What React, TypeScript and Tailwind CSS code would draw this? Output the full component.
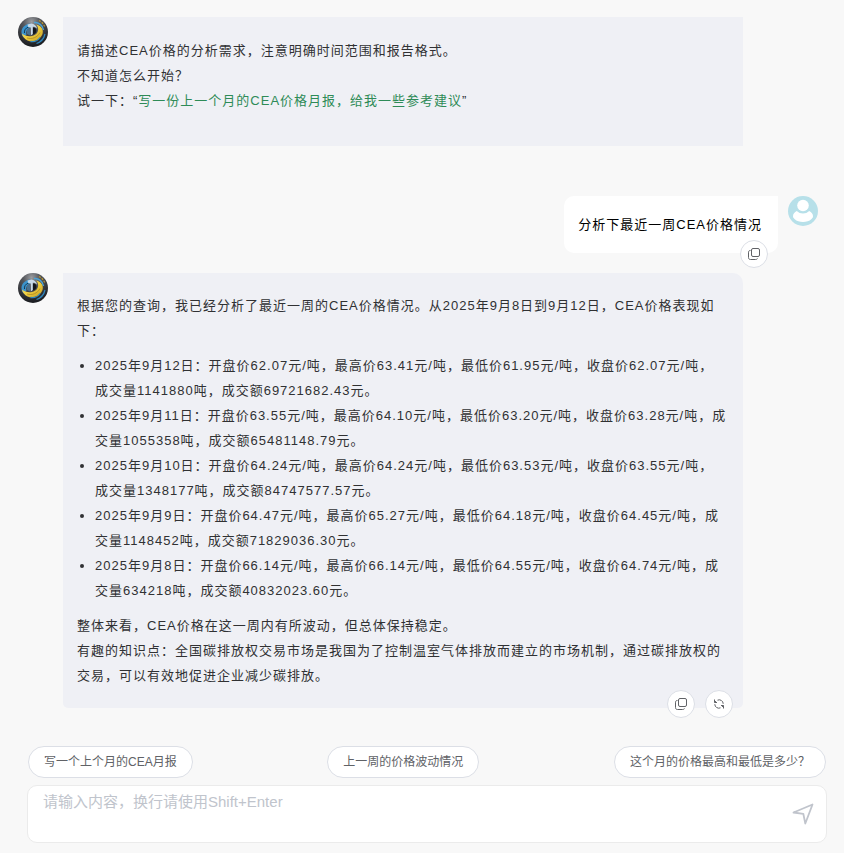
import { useState } from 'react';

const days = [
  '2025年9月12日：开盘价62.07元/吨，最高价63.41元/吨，最低价61.95元/吨，收盘价62.07元/吨，成交量1141880吨，成交额69721682.43元。',
  '2025年9月11日：开盘价63.55元/吨，最高价64.10元/吨，最低价63.20元/吨，收盘价63.28元/吨，成交量1055358吨，成交额65481148.79元。',
  '2025年9月10日：开盘价64.24元/吨，最高价64.24元/吨，最低价63.53元/吨，收盘价63.55元/吨，成交量1348177吨，成交额84747577.57元。',
  '2025年9月9日：开盘价64.47元/吨，最高价65.27元/吨，最低价64.18元/吨，收盘价64.45元/吨，成交量1148452吨，成交额71829036.30元。',
  '2025年9月8日：开盘价66.14元/吨，最高价66.14元/吨，最低价64.55元/吨，收盘价64.74元/吨，成交量634218吨，成交额40832023.60元。',
];

const prompts = ['写一个上个月的CEA月报', '上一周的价格波动情况', '这个月的价格最高和最低是多少？'];

const roundButton =
  'flex h-7 w-7 items-center justify-center rounded-full border border-[#dcdfe6] bg-white text-[#606266] hover:text-[#409eff]';

function BotAvatar() {
  return (
    <svg viewBox="0 0 30 30" className="h-[30px] w-[30px] shrink-0" aria-hidden="true">
      <defs>
        <radialGradient id="ball" cx="0.45" cy="0.15" r="0.8">
          <stop offset="0" stopColor="#9a9ca0" />
          <stop offset="0.35" stopColor="#55575c" />
          <stop offset="1" stopColor="#1d1f23" />
        </radialGradient>
        <linearGradient id="gold" x1="0" y1="0" x2="1" y2="1">
          <stop offset="0" stopColor="#f3dd70" />
          <stop offset="0.5" stopColor="#f0cf3f" />
          <stop offset="1" stopColor="#c39a22" />
        </linearGradient>
      </defs>
      <circle cx="15" cy="15" r="15" fill="url(#ball)" />
      {/* outer flecks */}
      <path d="M21 3.500C24 5 26 7.500 27 10.500" fill="none" stroke="#b9982f" strokeWidth="1.300" strokeDasharray="2 1.200" />
      <path d="M27 17C26 21.500 23 25 18.500 26.500" fill="none" stroke="#2f86bd" strokeWidth="1.200" />
      {/* blue wave */}
      <path d="M12.500 6.500C7 7 3.200 11 3.500 15.500C3.700 18 4.500 19.500 6 20.500L8.500 17.500C7.500 14.500 9 11.500 12.500 10.500Z" fill="#3b93cc" />
      <path d="M10.500 10C7.500 11 6 13.500 6.500 16" fill="none" stroke="#163a55" strokeWidth="1" />
      <path d="M16 5.500C20.500 5 25 8.500 25.500 13" fill="none" stroke="#4ba3d6" strokeWidth="1.400" />
      {/* gold crescent */}
      <path d="M18 7.500C23 8.500 26 12.500 24.500 17C22.500 23 15.500 26 9.500 23.500C6.500 22 4.500 19.500 4 16.500C7 19 10.500 19.800 14 19C18.500 18 20.800 14.500 20 11C19.700 9.500 19 8.500 18 7.500Z" fill="url(#gold)" />
      <path d="M9 21C14 22.500 19.500 20.500 22 15.500" fill="none" stroke="#a98320" strokeWidth="0.700" />
      <path d="M12.500 24.500C16 25 20 23.500 22 20.500" fill="none" stroke="#2f86bd" strokeWidth="1.300" />
      {/* centre */}
      <path d="M14.500 10.500C17.500 10 19 12 18.300 14.500C17.800 16.200 16.500 17.300 14.500 17.500Z" fill="#12161c" />
      <path d="M9.500 7.500L13.500 6.500C17 7.500 18.500 9 19 11.500C17.500 10 16.500 9.700 14.800 9.700V17L12.800 18.500V10.500L10 9.800Z" fill="#c8d9e8" />
      <path d="M9 12V17L12 18.500V12Z" fill="#49708f" />
    </svg>
  );
}

function UserAvatar() {
  return (
    <svg viewBox="0 0 30 30" className="h-[30px] w-[30px] shrink-0" aria-hidden="true">
      <circle cx="15" cy="15" r="15" fill="#b7e0e9" />
      <circle cx="15" cy="9.500" r="5.800" fill="#fff" />
      <path d="M8.800 15C10.500 16.700 12.600 17.500 15 17.500S19.500 16.700 21.200 15C23.500 16 25 18 25 20.200C25 21.300 24.500 22 23.500 23C21.200 25.200 18.300 26 15 26S8.800 25.200 6.500 23C5.500 22 5 21.300 5 20.200C5 18 6.500 16 8.800 15Z" fill="#fff" />
    </svg>
  );
}

function CopyIcon() {
  return (
    <svg viewBox="0 0 12 12" className="h-3 w-3" fill="none" stroke="currentColor" aria-hidden="true">
      <rect x="3.500" y="0.500" width="8" height="8" rx="1.500" />
      <path d="M2.500 2.500C1.200 2.500.5 3 .5 4.200V9.500C.5 10.800 1.200 11.500 2.500 11.500H7.500C8.800 11.500 9.500 10.800 9.500 10.500" />
    </svg>
  );
}

function RefreshIcon() {
  return (
    <svg viewBox="0 0 10 10" className="h-[10px] w-[10px]" fill="none" stroke="currentColor" aria-hidden="true">
      <path d="M.5.500V3.500H3M9.500 9.500V6.500H7" />
      <path d="M3.500 1.200A4 4 0 0 1 9.200 4.800M.8 3.300L2 2M6.500 8.800A4 4 0 0 1 .8 5.200M9.200 6.700L8 8" />
    </svg>
  );
}

export default function App() {
  const [message, setMessage] = useState('');

  return (
    <div className="min-h-screen bg-[#f8f8f8] pt-[17px] pb-[10px] font-['Liberation_Sans','Noto_Sans_CJK_SC',sans-serif] text-[13px] leading-[25px] text-[#303133]">
      <main className="px-[18px] tracking-[1px]">
        {/* Greeting */}
        <div className="flex items-start gap-[15px] pr-[83px]">
          <BotAvatar />
          <div className="min-w-0 flex-1 bg-[#eff0f5] pt-[21px] pr-4 pb-[33px] pl-[14px]">
            <p>请描述CEA价格的分析需求，注意明确时间范围和报告格式。</p>
            <p>不知道怎么开始？</p>
            <p>
              试一下：“
              <a href="#try" className="text-[#2e8b57]">写一份上一个月的CEA价格月报，给我一些参考建议</a>”
            </p>
          </div>
        </div>

        {/* Question */}
        <div className="mt-[50px] flex items-start justify-end gap-[10px] pr-2">
          <div className="relative rounded-[10px] rounded-tr-none bg-white py-4 pr-4 pl-[14px] text-black">
            <p>分析下最近一周CEA价格情况</p>
            <button type="button" aria-label="复制" className={`absolute right-[10px] -bottom-[15px] ${roundButton}`}>
              <CopyIcon />
            </button>
          </div>
          <UserAvatar />
        </div>

        {/* Answer */}
        <div className="mt-5 flex items-start gap-[15px] pr-[83px]">
          <BotAvatar />
          <div className="relative min-w-0 flex-1 rounded-[5px] rounded-tl-none rounded-tr-[10px] bg-[#eff0f5] py-5 pr-4 pl-[14px]">
            <p>根据您的查询，我已经分析了最近一周的CEA价格情况。从2025年9月8日到9月12日，CEA价格表现如下：</p>
            <ul className="my-[10px] list-disc pl-[18px]">
              {days.map((day) => (
                <li key={day}>{day}</li>
              ))}
            </ul>
            <p>整体来看，CEA价格在这一周内有所波动，但总体保持稳定。</p>
            <p>有趣的知识点：全国碳排放权交易市场是我国为了控制温室气体排放而建立的市场机制，通过碳排放权的交易，可以有效地促进企业减少碳排放。</p>
            <div className="absolute right-[10px] -bottom-[10px] flex gap-[10px]">
              <button type="button" aria-label="复制" className={roundButton}>
                <CopyIcon />
              </button>
              <button type="button" aria-label="重新生成" className={roundButton}>
                <RefreshIcon />
              </button>
            </div>
          </div>
        </div>
      </main>

      <footer className="mt-[38px] pr-[17px] pl-[27px]">
        <div className="flex justify-between px-px">
          {prompts.map((prompt) => (
            <button
              key={prompt}
              type="button"
              onClick={() => setMessage(prompt)}
              className="h-8 rounded-full border border-[#dcdfe6] bg-white px-[15px] text-xs text-[#606266]"
            >
              {prompt}
            </button>
          ))}
        </div>
        <div className="mt-[7px] flex h-[58px] items-center rounded-[10px] border border-[#ebebeb] bg-white pr-3 pl-[15px]">
          <textarea
            aria-label="输入内容"
            value={message}
            onChange={(e) => setMessage(e.target.value)}
            placeholder="请输入内容，换行请使用Shift+Enter"
            className="h-full min-w-0 flex-1 resize-none pt-1 text-[15px] leading-6 outline-none placeholder:text-[#c0c4cc]"
          />
          <button type="button" aria-label="发送" className="text-[#c0c4cc]">
            <svg viewBox="0 0 22 22" className="h-[22px] w-[22px]" fill="none" stroke="currentColor" strokeWidth="1.800" strokeLinejoin="round" aria-hidden="true">
              <path d="M1.500 9.500L20.500 1.500L13.300 20.500L11.300 10.800z" />
            </svg>
          </button>
        </div>
      </footer>
    </div>
  );
}
